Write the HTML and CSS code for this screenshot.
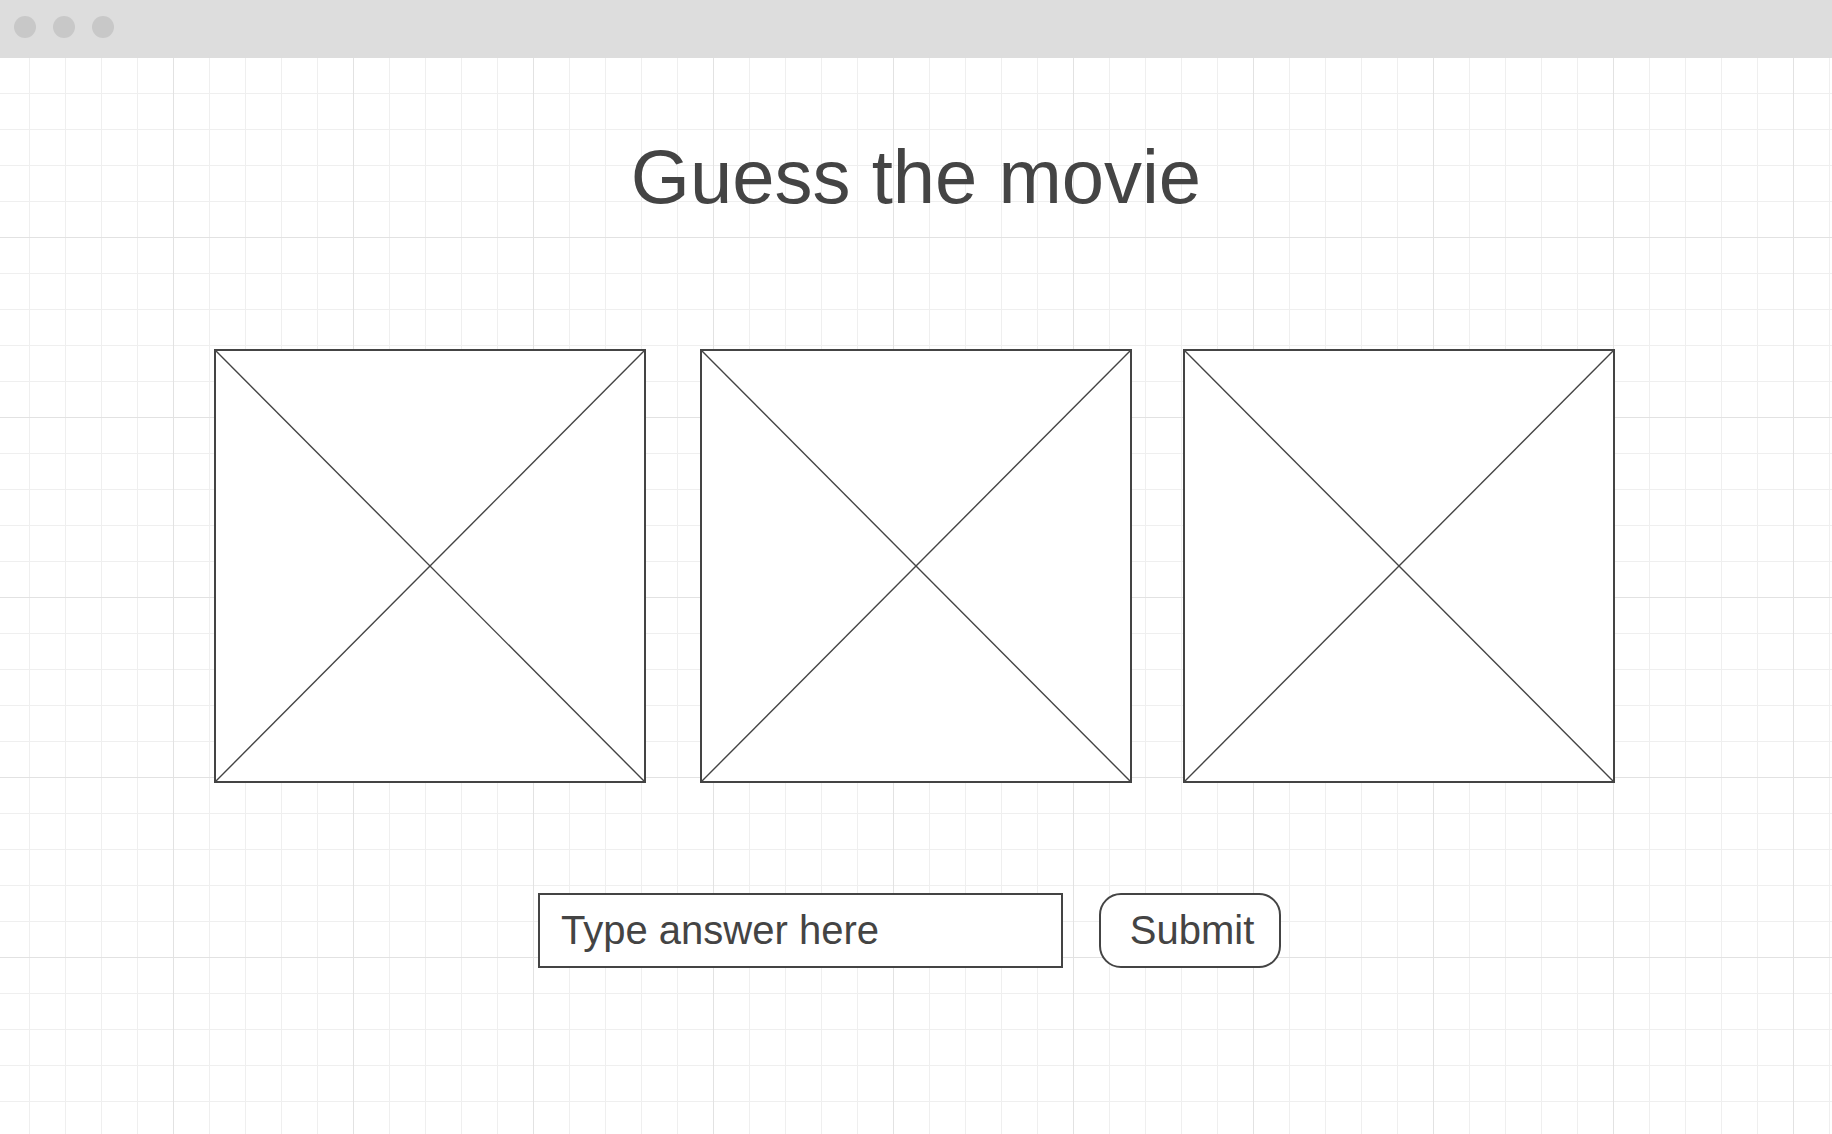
FILE: index.html
```html
<!DOCTYPE html>
<html lang="en">
<head>
<meta charset="utf-8">
<title>Guess the movie</title>
<link rel="stylesheet" href="styles.css">
</head>
<body>
<header class="titlebar">
  <span class="dot"></span><span class="dot"></span><span class="dot"></span>
</header>
<main class="canvas">
  <h1 class="title">Guess the movie</h1>
  <div class="images">
    <div class="placeholder"><svg viewBox="0 0 100 100" preserveAspectRatio="none"><line x1="0" y1="0" x2="100" y2="100"/><line x1="100" y1="0" x2="0" y2="100"/></svg></div>
    <div class="placeholder"><svg viewBox="0 0 100 100" preserveAspectRatio="none"><line x1="0" y1="0" x2="100" y2="100"/><line x1="100" y1="0" x2="0" y2="100"/></svg></div>
    <div class="placeholder"><svg viewBox="0 0 100 100" preserveAspectRatio="none"><line x1="0" y1="0" x2="100" y2="100"/><line x1="100" y1="0" x2="0" y2="100"/></svg></div>
  </div>
  <form class="answer">
    <input class="answer-input" type="text" placeholder="Type answer here">
    <button class="submit" type="button">Submit</button>
  </form>
</main>
</body>
</html>
```
FILE: styles.css
```css
html, body {
  margin: 0;
  padding: 0;
}
body {
  width: 1832px;
  height: 1134px;
  overflow: hidden;
  font-family: "Liberation Sans", Arial, sans-serif;
  color: #444;
  background: #fff;
}
.titlebar {
  height: 58px;
  background: #dddddd;
  display: flex;
  align-items: flex-start;
  gap: 17px;
  padding: 16px 0 0 14px;
  box-sizing: border-box;
}
.dot {
  width: 22px;
  height: 22px;
  border-radius: 50%;
  background: #c8c8c8;
}
.canvas {
  height: 1076px;
  display: flex;
  flex-direction: column;
  align-items: center;
  background-color: #fff;
  background-image:
    linear-gradient(to right, transparent 179px, #e2e2e2 179px),
    linear-gradient(to bottom, transparent 179px, #e2e2e2 179px),
    linear-gradient(to right, transparent 35px, #efefef 35px),
    linear-gradient(to bottom, transparent 35px, #efefef 35px);
  background-size: 180px 180px, 180px 180px, 36px 36px, 36px 36px;
  background-position: -6px 0, -6px 0, -6px 0, -6px 0;
}
.title {
  margin: 0;
  padding-top: 81px;
  font-size: 76px;
  line-height: 1;
  font-weight: normal;
  color: #444;
}
.images {
  margin-top: 134px;
  padding-right: 3px;
  display: flex;
}
.placeholder {
  width: 432px;
  height: 434px;
  box-sizing: border-box;
  border: 2px solid #444;
  background: #fff;
}
.placeholder:nth-child(2) {
  margin-left: 54px;
}
.placeholder:nth-child(3) {
  margin-left: 51px;
}
.placeholder svg {
  display: block;
  width: 100%;
  height: 100%;
}
.placeholder line {
  stroke: #444;
  stroke-width: 1.4;
  vector-effect: non-scaling-stroke;
}
.answer {
  margin: 110px 0 0;
  padding-right: 13px;
  display: flex;
  gap: 36px;
}
.answer-input {
  width: 525px;
  height: 75px;
  box-sizing: border-box;
  border: 2px solid #444;
  border-radius: 0;
  padding: 0 0 0 21px;
  margin: 0;
  font-family: "Liberation Sans", Arial, sans-serif;
  font-size: 40px;
  color: #444;
  background: #fff;
  outline: none;
}
.answer-input::placeholder {
  color: #444;
  opacity: 1;
}
.submit {
  width: 182px;
  height: 75px;
  box-sizing: border-box;
  border: 2px solid #444;
  border-radius: 22px;
  margin: 0;
  padding: 0 0 0 4px;
  font-family: "Liberation Sans", Arial, sans-serif;
  font-size: 40px;
  color: #444;
  background: #fff;
}
```
